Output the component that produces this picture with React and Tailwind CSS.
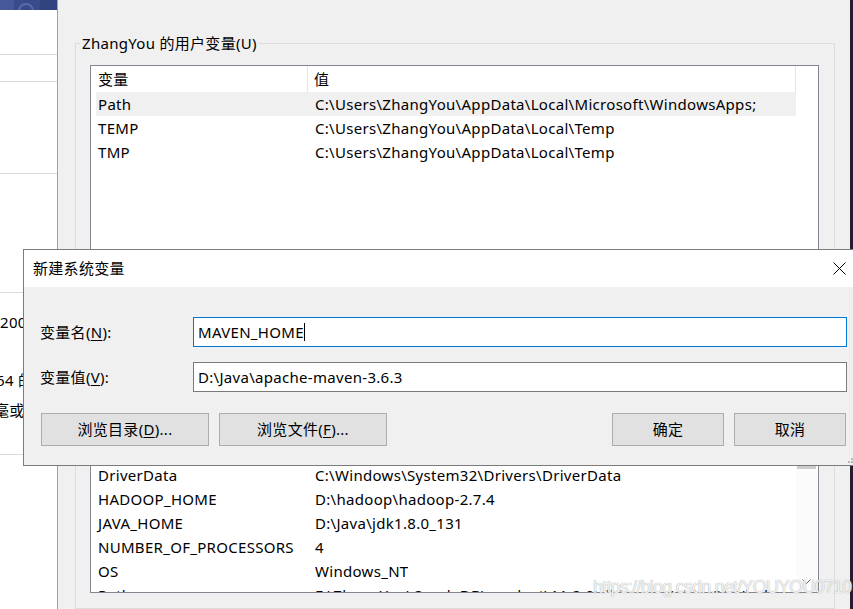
import React from 'react';

const userVars = [
  ['Path', 'C:\\Users\\ZhangYou\\AppData\\Local\\Microsoft\\WindowsApps;'],
  ['TEMP', 'C:\\Users\\ZhangYou\\AppData\\Local\\Temp'],
  ['TMP', 'C:\\Users\\ZhangYou\\AppData\\Local\\Temp'],
];

const systemVars = [
  ['ACSetupSvcPort', '23210'],
  ['ACSvcPort', '17532'],
  ['CLASSPATH', '.;%JAVA_HOME%\\lib;%JAVA_HOME%\\lib\\tools.jar'],
  ['ComSpec', 'C:\\Windows\\system32\\cmd.exe'],
  ['DriverData', 'C:\\Windows\\System32\\Drivers\\DriverData'],
  ['HADOOP_HOME', 'D:\\hadoop\\hadoop-2.7.4'],
  ['JAVA_HOME', 'D:\\Java\\jdk1.8.0_131'],
  ['NUMBER_OF_PROCESSORS', '4'],
  ['OS', 'Windows_NT'],
  ['Path', 'F:\\ZhangYou\\OracleDB\\product\\11.2.0\\dbhome_1\\bin;C:\\Windows\\system32'],
];

const ListHeader = () => (
  <div className="flex h-[26px] shrink-0 items-center bg-white">
    <div className="w-[217px] h-full flex items-center pl-[7px] border-r border-[#e5e5e5]">变量</div>
    <div className="w-[488px] h-full flex items-center pl-[6px] border-r border-[#e5e5e5]">值</div>
  </div>
);

const ListRow = ({ name, value, selected }) => (
  <div className={`flex h-[24px] items-center ml-[5px] w-[700px] whitespace-nowrap ${selected ? 'bg-[#f0f0f0]' : ''}`}>
    <div className="w-[212px] pl-[2px] shrink-0">{name}</div>
    <div className="pl-[7px] overflow-hidden">{value}</div>
  </div>
);

const WinButton = ({ children, className = '' }) => (
  <div className={`h-[33px] border border-[#adadad] bg-[#e1e1e1] flex items-center justify-center whitespace-nowrap ${className}`}>
    <span>{children}</span>
  </div>
);

const LeftPanel = () => (
  <div className="w-[57px] h-full shrink-0 bg-white flex flex-col overflow-hidden whitespace-nowrap">
    <div className="h-[10px] shrink-0 bg-[#3a4b8c] overflow-hidden">
      <svg width="57" height="10" viewBox="0 0 57 10">
        <rect x="0" y="0" width="14" height="10" fill="#46579a" />
        <circle cx="26" cy="11" r="7" fill="none" stroke="#5a6baa" strokeWidth="2" />
        <rect x="40" y="0" width="17" height="10" fill="#33437f" />
      </svg>
    </div>
    <div className="h-[45px] shrink-0 border-b border-[#dadada]" />
    <div className="h-[27px] shrink-0 border-b border-[#dadada]" />
    <div className="h-[92px] shrink-0 border-b border-[#dadada]" />
    <div className="h-[119px] shrink-0 border-b border-[#dadada]" />
    <div className="h-[162px] shrink-0 border-b border-[#dadada] flex flex-col">
      <div className="mt-[19px] leading-[20px]">2004</div>
      <div className="mt-[38px] leading-[20px] -ml-[4px]">64 的</div>
      <div className="mt-[10px] leading-[20px] -ml-[6px]">毫或位</div>
    </div>
  </div>
);

const EnvWindow = () => (
  <div className="flex-1 h-full bg-[#f0f0f0] border-l border-l-[#a0a0a0] border-r-[3px] border-r-[#2b1b2e] pt-[33px] pl-[17px] pr-[15px] flex flex-col overflow-hidden">
    <fieldset className="border border-[#dcdcdc] pb-[10px] shrink-0">
      <legend className="ml-[4px] px-[2px] leading-[20px]">ZhangYou 的用户变量(U)</legend>
      <div className="mt-[12px] ml-[14px] mr-[15px] h-[200px] bg-white border border-[#828790] flex flex-col overflow-hidden">
        <ListHeader />
        {userVars.map(([n, v], i) => (
          <ListRow key={n} name={n} value={v} selected={i === 0} />
        ))}
      </div>
      <div className="flex justify-end gap-[10px] mt-[10px] mr-[15px]">
        <WinButton className="w-[112px]">新建(N)...</WinButton>
        <WinButton className="w-[112px]">编辑(E)...</WinButton>
        <WinButton className="w-[112px]">删除(D)</WinButton>
      </div>
    </fieldset>
    <fieldset className="border border-[#dcdcdc] mt-[6px] flex-1">
      <legend className="ml-[4px] px-[2px] leading-[20px]">系统变量(S)</legend>
      <div className="mt-[12px] ml-[14px] mr-[15px] h-[236px] bg-white border border-[#828790] flex overflow-hidden">
        <div className="w-[705px] flex flex-col">
          <ListHeader />
          <div className="flex-1 overflow-hidden">
            <div className="-mt-[17px]">
              {systemVars.map(([n, v]) => (
                <ListRow key={n} name={n} value={v} />
              ))}
            </div>
          </div>
        </div>
        <div className="w-[21px] h-full bg-[#fbfbfb] flex flex-col">
          <div className="h-[18px] flex items-center justify-center">
            <svg width="9" height="5" viewBox="0 0 9 5"><path d="M0.5 4.5 L4.5 0.5 L8.5 4.5" fill="none" stroke="#606060" /></svg>
          </div>
          <div className="h-[93px] mx-[1px] bg-[#cdcdcd]" />
          <div className="flex-1" />
          <div className="h-[20px] flex items-start justify-center pt-[7px]">
            <svg width="9" height="5" viewBox="0 0 9 5"><path d="M0.5 0.5 L4.5 4.5 L8.5 0.5" fill="none" stroke="#606060" /></svg>
          </div>
        </div>
      </div>
    </fieldset>
  </div>
);

const NewVarDialog = () => (
  <div className="absolute left-[23px] top-[249px] w-[840px] h-[217px] border border-[#7c7c7c] bg-[#f0f0f0] flex flex-col">
    <div className="h-[37px] shrink-0 bg-white flex items-center justify-between">
      <div className="pl-[9px]">新建系统变量</div>
      <div className="w-[46px] h-full flex items-center justify-center">
        <svg width="13" height="13" viewBox="0 0 13 13">
          <path d="M0.5 0.5 L12.5 12.5 M12.5 0.5 L0.5 12.5" stroke="#000" strokeWidth="1" />
        </svg>
      </div>
    </div>
    <div className="flex-1 pt-[30px] pl-[16px] pr-[15px] flex flex-col relative">
      <div className="flex items-center">
        <div className="w-[153px] shrink-0">变量名(<u className="underline-offset-2">N</u>):</div>
        <div className="flex-1 h-[30px] bg-white border border-[#0078d7] flex items-center pl-[4px]">
          <span>MAVEN_HOME</span>
          <span className="w-[1px] h-[18px] bg-black" />
        </div>
      </div>
      <div className="flex items-center mt-[15px]">
        <div className="w-[153px] shrink-0">变量值(<u className="underline-offset-2">V</u>):</div>
        <div className="flex-1 h-[30px] bg-white border border-[#7a7a7a] flex items-center pl-[4px]">
          <span>D:\Java\apache-maven-3.6.3</span>
        </div>
      </div>
      <div className="flex items-center mt-[21px]">
        <WinButton className="w-[168px] ml-[1px]">浏览目录(<u className="underline-offset-2">D</u>)...</WinButton>
        <WinButton className="w-[168px] ml-[10px]">浏览文件(<u className="underline-offset-2">F</u>)...</WinButton>
        <div className="flex-1" />
        <WinButton className="w-[112px]">确定</WinButton>
        <WinButton className="w-[112px] ml-[10px] mr-[1px]">取消</WinButton>
      </div>
      <svg className="absolute right-[6px] bottom-[2px]" width="8" height="8" viewBox="0 0 8 8">
        <rect x="6" y="0" width="2" height="2" fill="#b8b8b8" />
        <rect x="3" y="3" width="2" height="2" fill="#b8b8b8" />
        <rect x="6" y="3" width="2" height="2" fill="#b8b8b8" />
        <rect x="0" y="6" width="2" height="2" fill="#b8b8b8" />
        <rect x="3" y="6" width="2" height="2" fill="#b8b8b8" />
        <rect x="6" y="6" width="2" height="2" fill="#b8b8b8" />
      </svg>
    </div>
  </div>
);

export default function App() {
  return (
    <div className="relative w-[853px] h-[609px] overflow-hidden flex bg-white text-black text-[15px] tracking-[0.3px] [font-family:'Noto_Sans','Noto_Sans_CJK_SC',sans-serif]">
      <LeftPanel />
      <EnvWindow />
      <NewVarDialog />
      <div className="absolute left-[593px] top-[576px] text-[18px] leading-[22px] tracking-[-0.8px] [font-family:'Liberation_Sans',sans-serif] text-white/85 [text-shadow:0_0_1px_#8a8a8a] whitespace-nowrap pointer-events-none">
        https://blog.csdn.net/YOUYOU0710
      </div>
    </div>
  );
}
